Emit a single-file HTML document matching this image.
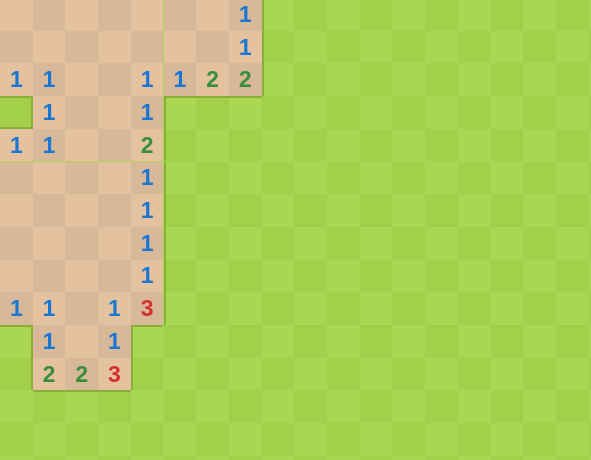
<!DOCTYPE html>
<html><head><meta charset="utf-8">
<style>
html,body{margin:0;padding:0;width:591px;height:460px;overflow:hidden;background:#aad751}
#b{position:relative;width:591px;height:460px;overflow:hidden}
.c{position:absolute;font-family:"Liberation Sans",sans-serif;font-weight:bold;font-size:23px;display:flex;align-items:center;justify-content:center;box-sizing:border-box}
</style></head><body><div id="b"></div>
<script>
(function(){
var S=32.7,OY=-2;
var rev={};
function R(r,a,b){for(var c=a;c<=b;c++)rev[r+','+c]=1;}
R(0,0,7);R(1,0,7);R(2,0,7);R(3,1,4);R(4,0,4);
for(var r=5;r<=9;r++)R(r,0,4);
R(10,1,3);R(11,1,3);
var nums={'0,7':1,'1,7':1,'2,0':1,'2,1':1,'2,4':1,'2,5':1,'2,6':2,'2,7':2,'3,1':1,'3,4':1,'4,0':1,'4,1':1,'4,4':2,'5,4':1,'6,4':1,'7,4':1,'8,4':1,'9,0':1,'9,1':1,'9,3':1,'9,4':3,'10,1':1,'10,3':1,'11,1':2,'11,2':2,'11,3':3};
var col={1:'#1976d2',2:'#388e3c',3:'#d32f2f'};
var b=document.getElementById('b'),h='';
for(var r=0;r<15;r++)for(var c=0;c<19;c++){
 var k=r+','+c,even=(r+c)%2==0,bg,sh='';
 var tp=OY+r*S,lf=c*S,hh=S,ww=S;
 if(tp+hh>460)hh=460-tp;
 if(lf+ww>591)ww=591-lf;
 if(hh<=0||ww<=0)continue;
 if(rev[k]){bg=even?'#e5c29f':'#d7b899';}
 else{bg=even?'#aad751':'#a2d149';
  var s=[];
  if(rev[r+','+(c-1)])s.push('inset 2px 0 0 #87af3a');
  if(rev[r+','+(c+1)])s.push('inset -2px 0 0 #87af3a');
  if(rev[(r-1)+','+c])s.push('inset 0 2px 0 #87af3a');
  if(rev[(r+1)+','+c])s.push('inset 0 -2px 0 #87af3a');
  if(s.length)sh='box-shadow:'+s.join(',')+';';
 }
 var n=nums[k]||'';
 h+='<div class="c" style="left:'+lf+'px;top:'+tp+'px;width:'+ww+'px;height:'+hh+'px;background:'+bg+';'+sh+(n?'color:'+col[n]+';':'')+'">'+n+'</div>';
}
b.innerHTML=h;
})();
</script></body></html>
